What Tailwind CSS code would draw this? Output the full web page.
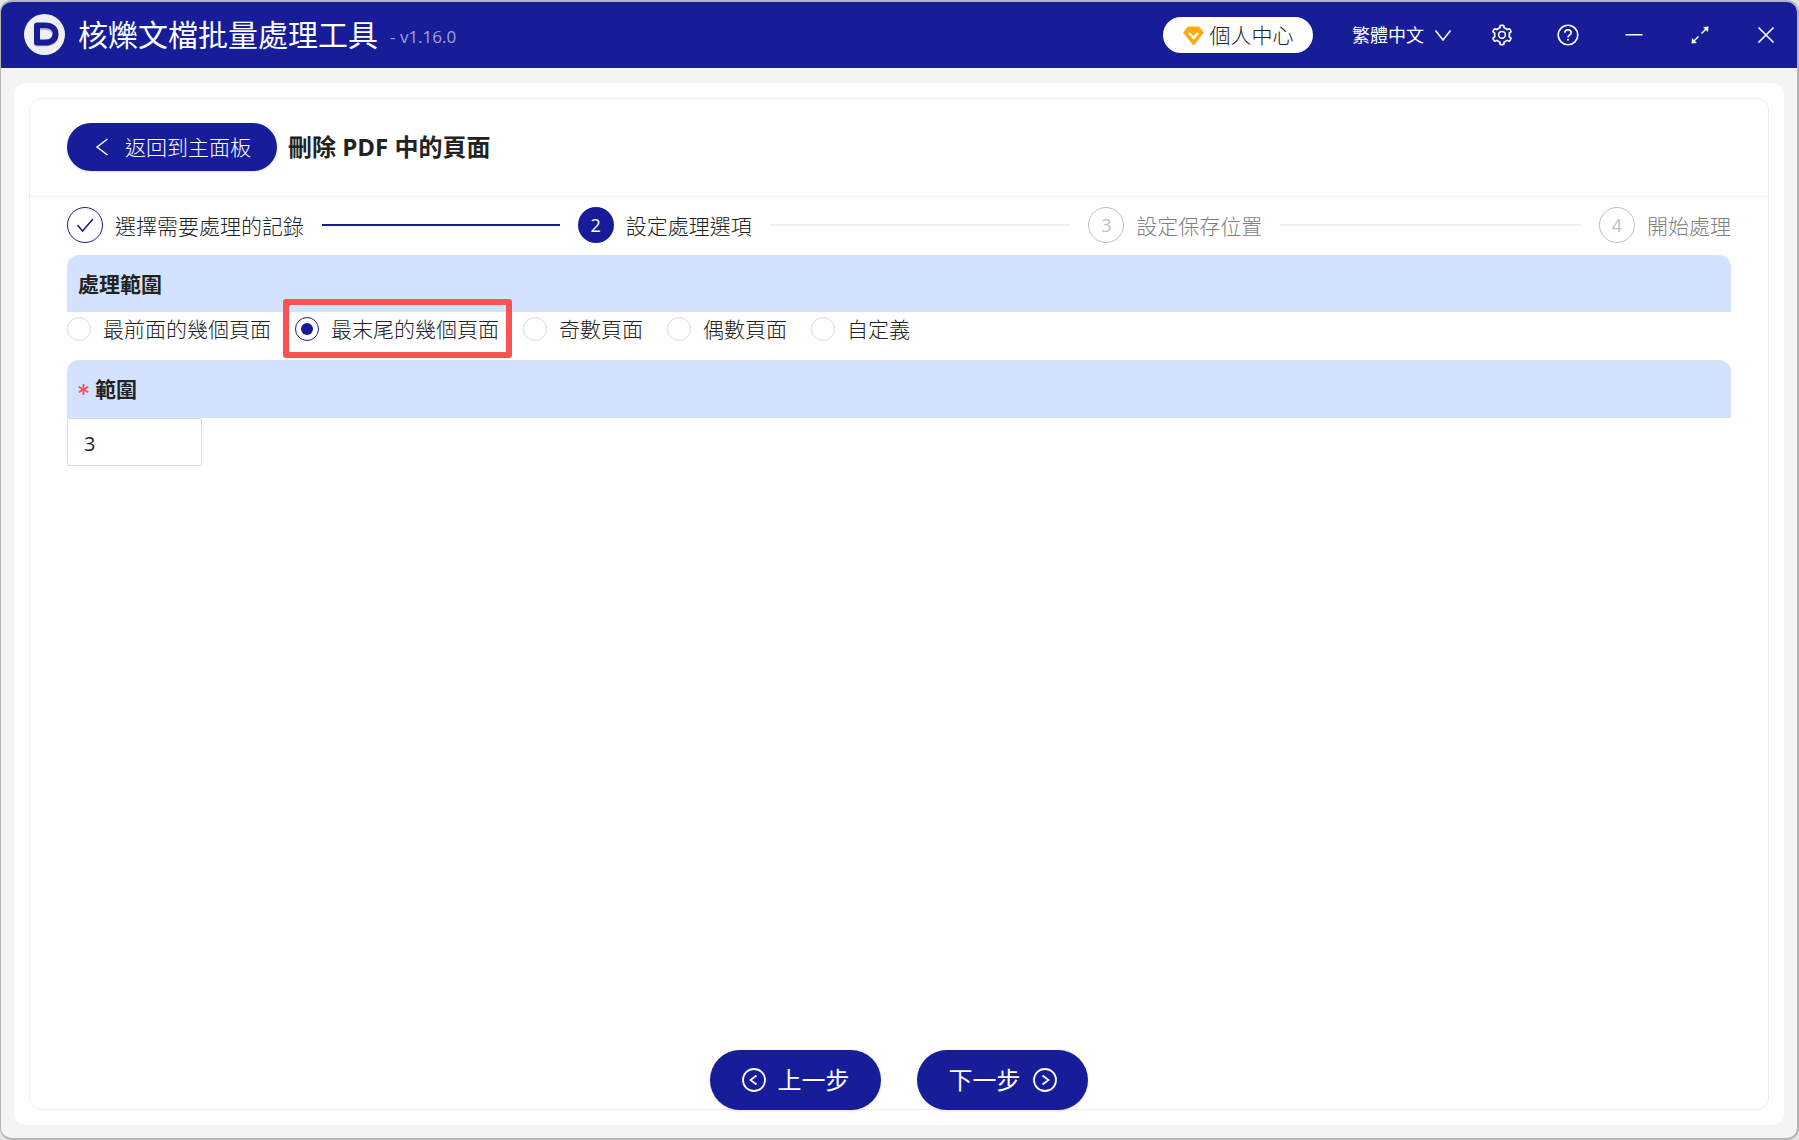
<!DOCTYPE html>
<html lang="zh-Hant">

<head>
    <meta charset="UTF-8">
    <meta name="viewport" content="width=device-width, initial-scale=1.0">
    <title>核爍文檔批量處理工具</title>
    <script src="https://cdn.jsdelivr.net/npm/@tailwindcss/browser@4"></script>
</head>

<body class="bg-[#e4e4e4] font-['Open_Sans','Noto_Sans_CJK_TC',sans-serif] text-[21px] leading-8 text-[#222]">
    <div class="min-h-screen flex flex-col bg-[#f4f4f4] border-t-2 border-l border-r-2 border-b-2 border-[#b4b4b4] rounded-xl overflow-hidden">

        <!-- Title bar -->
        <header class="h-[66px] shrink-0 bg-[#171c98] text-white flex items-center justify-between pl-[23px]">
            <div class="flex items-center">
                <svg class="w-[41px] h-[41px] mb-[2px]" viewBox="0 0 41 41" aria-hidden="true">
                    <circle cx="20.5" cy="20.5" r="20.5" fill="#f0f0f0" />
                    <path d="M13 13.500h8c7 0 10.500 3.500 10.500 8s-3.500 8-10.500 8h-8z" fill="none" stroke="#b9b9bd" stroke-width="6" stroke-linejoin="round" />
                    <path d="M13 11.500h8c7 0 10.500 3.500 10.500 8.500s-3.500 8.500-10.500 8.500h-8z" fill="#f0f0f0" stroke="#171c98" stroke-width="6" stroke-linejoin="round" />
                    <path d="M16 15.200h5.500c3.500 0 5.800 1.500 6.500 3.500" fill="none" stroke="#b9b9bd" stroke-width="1.500" />
                </svg>
                <h1 class="ml-[13px] text-[30px] leading-10">核爍文檔批量處理工具</h1>
                <span class="ml-3 mt-1 text-[17px] text-white/60">- v1.16.0</span>
            </div>
            <div class="flex items-center -mr-[2px]">
                <button class="h-9 w-[150px] mr-[39px] flex items-center justify-center gap-[6px] bg-white text-[#222] font-light rounded-full">
                    <svg class="w-[21px] h-[21px]" viewBox="0 0 21 21" aria-hidden="true">
                        <path d="M5 2h11l4.500 5.500L10.500 20 .5 7.500z" fill="#ffab10" stroke="#ffab10" stroke-linejoin="round" />
                        <path d="M6 8l4.500 5L15 8" fill="none" stroke="#fff" stroke-width="2.500" />
                    </svg>
                    個人中心
                </button>
                <button class="mr-[17px] flex items-center gap-[10px] text-[18px]">
                    繁體中文
                    <svg class="w-[18px] h-[18px]" viewBox="0 0 18 18" fill="none" stroke="currentColor" stroke-width="1.500" aria-hidden="true">
                        <path d="M1.500 4.500L9 14l7.500-9.500" />
                    </svg>
                </button>
                <button class="w-[66px] h-[66px] flex items-center justify-center" aria-label="設定">
                    <svg class="w-6 h-6" viewBox="0 0 1024 1024" fill="currentColor" aria-hidden="true">
                        <path d="M924.8 625.7l-65.5-56c3.1-19 4.7-38.4 4.7-57.8s-1.6-38.8-4.7-57.8l65.5-56a32.03 32.03 0 009.3-35.2l-.9-2.6a443.74 443.74 0 00-79.7-137.9l-1.8-2.1a32.12 32.12 0 00-35.1-9.5l-81.3 28.9c-30-24.6-63.5-44-99.7-57.6l-15.7-85a32.05 32.05 0 00-25.8-25.7l-2.7-.5c-52.1-9.4-106.9-9.4-159 0l-2.7.5a32.05 32.05 0 00-25.8 25.7l-15.8 85.4a351.86 351.86 0 00-99 57.4l-81.9-29.1a32 32 0 00-35.1 9.5l-1.8 2.1a446.02 446.02 0 00-79.7 137.9l-.9 2.6c-4.5 12.5-.8 26.5 9.3 35.2l66.3 56.6c-3.1 18.8-4.6 38-4.6 57.1 0 19.2 1.5 38.4 4.6 57.1L99 625.5a32.03 32.03 0 00-9.3 35.2l.9 2.6c18.1 50.4 44.9 96.9 79.7 137.9l1.8 2.1a32.12 32.12 0 0035.1 9.5l81.9-29.1c29.8 24.5 63.1 43.9 99 57.4l15.8 85.4a32.05 32.05 0 0025.8 25.7l2.7.5a449.4 449.4 0 00159 0l2.7-.5a32.05 32.05 0 0025.8-25.7l15.7-85a350 350 0 0099.7-57.6l81.3 28.9a32 32 0 0035.1-9.5l1.8-2.1c34.8-41.1 61.6-87.5 79.7-137.9l.9-2.6c4.5-12.3.8-26.3-9.3-35zM788.3 465.9c2.5 15.1 3.8 30.6 3.8 46.1s-1.3 31-3.8 46.1l-6.6 40.1 74.7 63.9a370.03 370.03 0 01-42.6 73.6L721 702.8l-31.4 25.8c-23.9 19.6-50.5 35-79.3 45.8l-38.1 14.3-17.9 97a377.5 377.5 0 01-85 0l-17.9-97.2-37.8-14.5c-28.5-10.8-55-26.2-78.7-45.7l-31.4-25.9-93.4 33.2c-17-22.9-31.2-47.6-42.6-73.6l75.5-64.5-6.5-40c-2.4-14.9-3.7-30.3-3.7-45.5 0-15.3 1.2-30.6 3.7-45.5l6.5-40-75.5-64.5c11.3-26.1 25.6-50.7 42.6-73.6l93.4 33.2 31.4-25.9c23.7-19.5 50.2-34.9 78.7-45.7l37.9-14.3 17.9-97.2c28.1-3.2 56.8-3.2 85 0l17.9 97 38.1 14.3c28.7 10.8 55.4 26.2 79.3 45.8l31.4 25.8 92.8-32.9c17 22.9 31.2 47.6 42.6 73.6L781.8 426l6.5 39.9z" />
                        <circle cx="512" cy="502" r="144" fill="none" stroke="currentColor" stroke-width="64" />
                    </svg>
                </button>
                <button class="w-[66px] h-[66px] flex items-center justify-center" aria-label="說明">
                    <svg class="w-[22px] h-[22px]" viewBox="0 0 22 22" fill="none" stroke="currentColor" stroke-width="1.600" aria-hidden="true">
                        <circle cx="11" cy="11" r="9.800" />
                        <path d="M7.800 8.800c0-1.700 1.400-2.900 3.200-2.900s3.200 1.200 3.200 2.800c0 2.300-3.200 2.300-3.200 4.800" />
                        <circle cx="11" cy="15.800" r="1" fill="currentColor" stroke="none" />
                    </svg>
                </button>
                <button class="w-[66px] h-[66px] flex items-center justify-center" aria-label="最小化">
                    <svg class="w-[18px] h-[18px]" viewBox="0 0 18 18" fill="none" stroke="currentColor" stroke-width="1.600" aria-hidden="true">
                        <path d="M.5 8.800h17" />
                    </svg>
                </button>
                <button class="w-[66px] h-[66px] flex items-center justify-center" aria-label="最大化">
                    <svg class="w-[18px] h-[18px]" viewBox="0 0 18 18" aria-hidden="true">
                        <path d="M10.500 7.500L15 3M7.500 10.500L3 15" fill="none" stroke="currentColor" stroke-width="1.500" />
                        <path d="M12 1l5.500-.5L17 6zM.5 17.500L1 12l5 5z" fill="currentColor" />
                    </svg>
                </button>
                <button class="w-[66px] h-[66px] flex items-center justify-center" aria-label="關閉">
                    <svg class="w-[18px] h-[18px]" viewBox="0 0 18 18" fill="none" stroke="currentColor" stroke-width="1.600" aria-hidden="true">
                        <path d="M1.500 1.500l15 15M16.500 1.500l-15 15" />
                    </svg>
                </button>
            </div>
        </header>

        <!-- Main panel -->
        <main class="grow flex flex-col bg-white rounded-xl mt-[15px] mx-[13px] mb-[13px] p-[15px]">
            <div class="grow flex flex-col border border-[#eee] rounded-xl">

                <div class="h-[98px] shrink-0 flex items-center gap-[11px] px-[37px] pb-[2px] border-b border-[#eee]">
                    <button class="h-12 w-[210px] flex items-center justify-center gap-[14px] bg-[#171c98] text-white font-light rounded-full shadow-sm">
                        <svg class="w-[18px] h-[18px]" viewBox="0 0 18 18" fill="none" stroke="currentColor" stroke-width="1.500" aria-hidden="true">
                            <path d="M14.500 1L4 9l10.500 8" />
                        </svg>
                        返回到主面板
                    </button>
                    <h2 class="text-[24px] font-bold">刪除 PDF 中的頁面</h2>
                </div>

                <div class="grow flex flex-col px-[37px]">
                    <!-- Steps -->
                    <ol class="flex gap-[18px] pt-[10px] pb-3 font-light">
                        <li class="flex-1 flex items-center">
                            <span class="w-9 h-9 flex items-center justify-center border border-[#171c98] text-[#171c98] rounded-full">
                                <svg class="w-[18px] h-[18px]" viewBox="0 0 18 18" fill="none" stroke="currentColor" stroke-width="1.500" aria-hidden="true">
                                    <path d="M1.500 9l5 6L17 3" />
                                </svg>
                            </span>
                            <span class="ml-3 mr-[18px] pt-[2px]">選擇需要處理的記錄</span>
                            <span class="grow h-[2px] bg-[#171c98]"></span>
                        </li>
                        <li class="flex-1 flex items-center">
                            <span class="w-9 h-9 flex items-center justify-center bg-[#171c98] text-white text-[18px] font-normal rounded-full">2</span>
                            <span class="ml-3 mr-[18px] pt-[2px]">設定處理選項</span>
                            <span class="grow h-[2px] bg-[#f0f0f0]"></span>
                        </li>
                        <li class="flex-1 flex items-center text-[#808080]">
                            <span class="w-9 h-9 flex items-center justify-center border border-[#bfbfbf] text-[#bfbfbf] text-[18px] font-normal rounded-full">3</span>
                            <span class="ml-3 mr-[18px] pt-[2px]">設定保存位置</span>
                            <span class="grow h-[2px] bg-[#f0f0f0]"></span>
                        </li>
                        <li class="flex items-center text-[#808080]">
                            <span class="w-9 h-9 flex items-center justify-center border border-[#bfbfbf] text-[#bfbfbf] text-[18px] font-normal rounded-full">4</span>
                            <span class="ml-3 pt-[2px]">開始處理</span>
                        </li>
                    </ol>

                    <!-- Page range -->
                    <h3 id="range-title" class="h-[57px] flex items-center px-[11px] bg-[#d3e2fd] rounded-t-xl font-bold">處理範圍</h3>
                    <div role="radiogroup" aria-labelledby="range-title" class="h-12 flex items-start gap-6 pt-[5px] leading-6 font-light">
                        <label class="flex items-center gap-3">
                            <input type="radio" name="range" class="appearance-none w-6 h-6 border border-[#d9d9d9] rounded-full">
                            最前面的幾個頁面
                        </label>
                        <label class="relative flex items-center gap-3">
                            <input type="radio" name="range" checked class="appearance-none w-6 h-6 flex items-center justify-center border border-[#171c98] rounded-full before:w-3 before:h-3 before:rounded-full before:bg-[#171c98]">
                            最末尾的幾個頁面
                            <span class="absolute -left-3 -right-[13px] -top-[18px] -bottom-[17px] border-[6px] border-[#fd5252] rounded-[3px] pointer-events-none"></span>
                        </label>
                        <label class="flex items-center gap-3">
                            <input type="radio" name="range" class="appearance-none w-6 h-6 border border-[#d9d9d9] rounded-full">
                            奇數頁面
                        </label>
                        <label class="flex items-center gap-3">
                            <input type="radio" name="range" class="appearance-none w-6 h-6 border border-[#d9d9d9] rounded-full">
                            偶數頁面
                        </label>
                        <label class="flex items-center gap-3">
                            <input type="radio" name="range" class="appearance-none w-6 h-6 border border-[#d9d9d9] rounded-full">
                            自定義
                        </label>
                    </div>

                    <!-- Page count -->
                    <label for="page-count" class="h-[58px] flex items-center gap-[6px] px-[11px] bg-[#d3e2fd] rounded-t-xl font-bold">
                        <svg class="w-[11px] h-[11px]" viewBox="0 0 11 11" fill="none" stroke="#ff4d4f" stroke-width="1.800" aria-hidden="true">
                            <path d="M5.500 0v11M.7 2.700l9.600 5.600M10.300 2.700L.7 8.300" />
                        </svg>
                        範圍
                    </label>
                    <input id="page-count" type="text" value="3" class="w-[135px] h-12 px-4 pt-[2px] border border-[#d9d9d9] rounded-[3px] text-[20px]">

                    <!-- Footer buttons -->
                    <div class="mt-auto -mb-px flex justify-center gap-9 text-[24px]">
                        <button class="h-[60px] w-[171px] flex items-center justify-center gap-3 bg-[#171c98] text-white rounded-full shadow-sm">
                            <svg class="w-6 h-6" viewBox="0 0 24 24" fill="none" stroke="currentColor" stroke-width="1.800" aria-hidden="true">
                                <circle cx="12" cy="12" r="11" />
                                <path d="M14.500 7.500L8.500 12l6 4.500" />
                            </svg>
                            上一步
                        </button>
                        <button class="h-[60px] w-[171px] flex items-center justify-center gap-3 bg-[#171c98] text-white rounded-full shadow-sm">
                            下一步
                            <svg class="w-6 h-6" viewBox="0 0 24 24" fill="none" stroke="currentColor" stroke-width="1.800" aria-hidden="true">
                                <circle cx="12" cy="12" r="11" />
                                <path d="M9.500 7.500l6 4.500-6 4.500" />
                            </svg>
                        </button>
                    </div>
                </div>
            </div>
        </main>
    </div>
</body>

</html>
